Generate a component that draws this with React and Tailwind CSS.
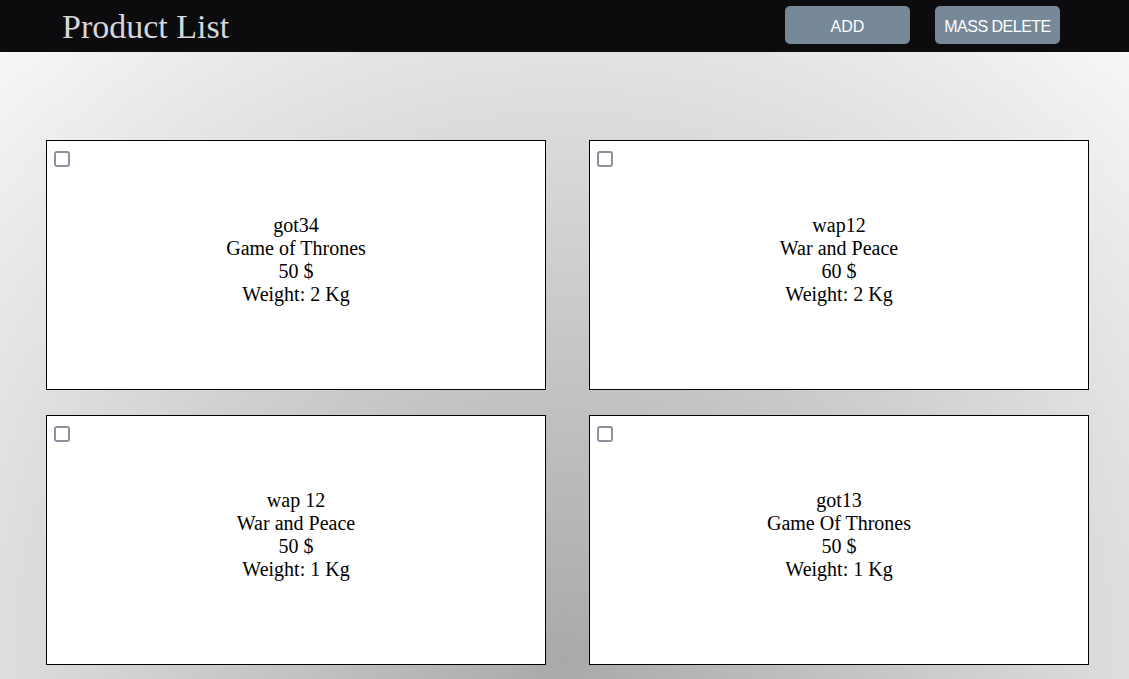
import React, { useState } from "react";

const PRODUCTS = [
  { sku: "got34", name: "Game of Thrones", price: 50, weight: 2 },
  { sku: "wap12", name: "War and Peace", price: 60, weight: 2 },
  { sku: "wap 12", name: "War and Peace", price: 50, weight: 1 },
  { sku: "got13", name: "Game Of Thrones", price: 50, weight: 1 },
];

function ProductCard({ product, checked, onToggle }) {
  return (
    <div className="relative h-[250px] bg-white border border-black">
      <input
        type="checkbox"
        checked={checked}
        onChange={onToggle}
        className="absolute left-[7px] top-[10px] w-[16px] h-[16px] m-0 appearance-none bg-white border-2 border-[#8f8f9d] rounded-[3px] checked:bg-[#0075ff] checked:border-[#0075ff]"
      />
      <div className="h-full flex flex-col items-center justify-center pb-[10px] text-[20px] leading-[23px] text-black font-['Liberation_Serif',serif]">
        <span>{product.sku}</span>
        <span>{product.name}</span>
        <span>{product.price} $</span>
        <span>Weight: {product.weight} Kg</span>
      </div>
    </div>
  );
}

export default function App() {
  const [selected, setSelected] = useState([]);

  const toggle = (sku) => {
    setSelected(prev => prev.includes(sku) ? prev.filter(s => s !== sku) : [...prev, sku]);
  };

  return (
    <div className="min-h-screen flex flex-col">
      <header className="h-[52px] bg-[#0c0c0e] flex items-center justify-between pl-[62px] pr-[69px]">
        <h1 className="text-[34px] leading-none text-[#d6d6dc] font-['Liberation_Serif',serif] pt-[1px]">Product List</h1>
        <div className="flex gap-[25px] pb-[2px]">
          <button className="w-[125px] h-[38px] pt-[3px] rounded-[5px] bg-[#778899] text-white text-[16px] font-['Liberation_Sans',sans-serif]">
            ADD
          </button>
          <button className="w-[125px] h-[38px] pt-[3px] rounded-[5px] bg-[#778899] text-white text-[16px] font-['Liberation_Sans',sans-serif] tracking-[-0.5px]">
            MASS DELETE
          </button>
        </div>
      </header>

      <main className="flex-1 min-h-[627px] pt-[88px] pb-[60px] pl-[46px] pr-[40px] bg-[radial-gradient(circle_at_564px_610px,#a9a9a9_0px,#ffffff_920px)]">
        <div className="grid grid-cols-[500px_500px] gap-x-[43px] gap-y-[25px]">
          {PRODUCTS.map(p => (
            <ProductCard
              key={p.sku}
              product={p}
              checked={selected.includes(p.sku)}
              onToggle={() => toggle(p.sku)}
            />
          ))}
        </div>
      </main>
    </div>
  );
}
